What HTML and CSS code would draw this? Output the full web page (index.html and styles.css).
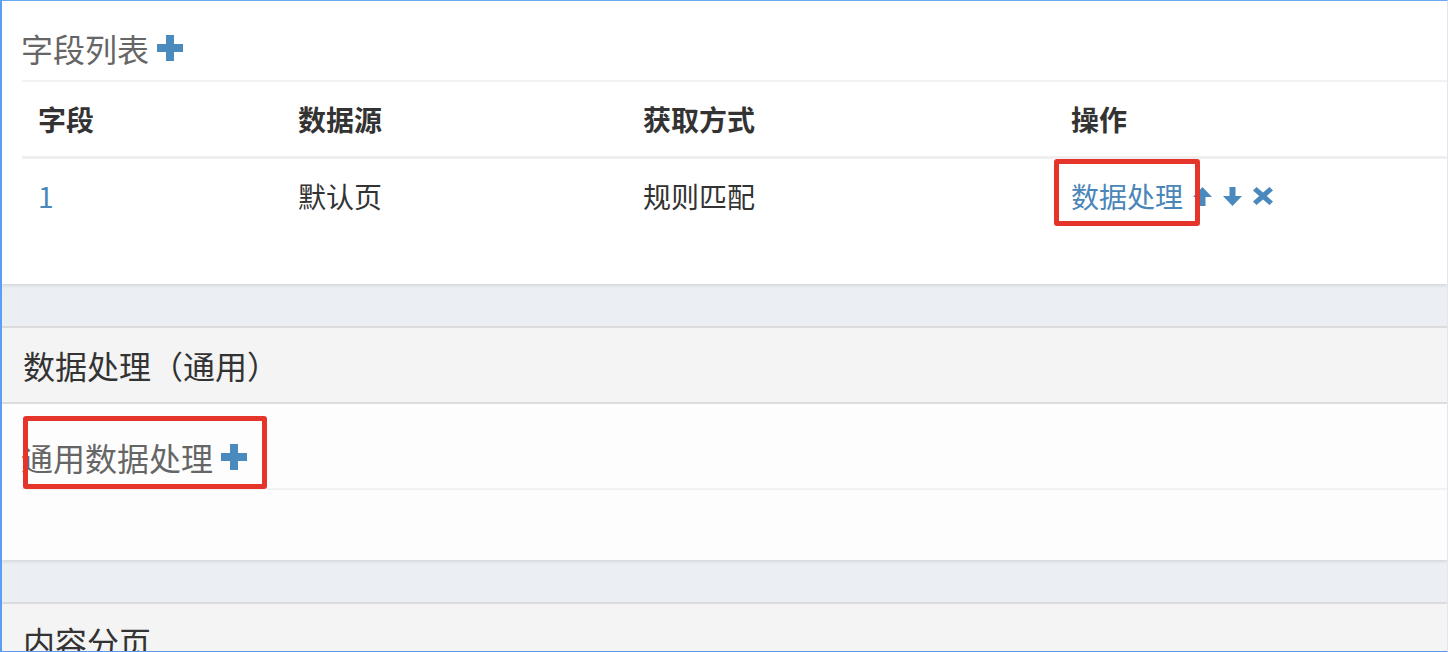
FILE: index.html
```html
<!DOCTYPE html>
<html lang="zh-CN">
<head>
<meta charset="utf-8">
<title>字段列表</title>
<link rel="stylesheet" href="styles.css">
</head>
<body>
<div class="frame">
  <section class="panel">
    <div class="panel-body">
      <h3 class="block-title">字段列表
        <svg class="plus" viewBox="0 0 26 26" width="26" height="26"><path d="M9 0h8v9h9v8h-9v9h-8v-9h-9v-8h9z"/></svg>
      </h3>
      <table class="grid">
        <thead>
          <tr><th class="c1">字段</th><th class="c2">数据源</th><th class="c3">获取方式</th><th>操作</th></tr>
        </thead>
        <tbody>
          <tr>
            <td><a class="link">1</a></td>
            <td>默认页</td>
            <td>规则匹配</td>
            <td>
              <span class="ops">
                <a class="link mark mark-op">数据处理</a>
                <svg class="ico up" viewBox="0 0 19 19" width="19" height="19"><path d="M9.5 0L19 10H12.5V19H6.5V10H0Z"/></svg>
                <svg class="ico" viewBox="0 0 19 19" width="19" height="19"><path d="M9.5 19L19 9H12.5V0H6.5V9H0Z"/></svg>
                <svg class="ico" viewBox="0 0 20 18" width="20" height="18"><path d="M3.5 0L10 5.6 16.5 0 20 3.4 13.8 9 20 14.6 16.5 18 10 12.4 3.5 18 0 14.6 6.2 9 0 3.4Z"/></svg>
              </span>
            </td>
          </tr>
        </tbody>
      </table>
    </div>
  </section>
  <div class="gap"></div>
  <section class="panel boxed">
    <div class="panel-head">数据处理（通用）</div>
    <div class="panel-body body-2">
      <h3 class="block-title"><span class="mark mark-add">通用数据处理
        <svg class="plus" viewBox="0 0 26 26" width="26" height="26"><path d="M9 0h8v9h9v8h-9v9h-8v-9h-9v-8h9z"/></svg></span>
      </h3>
      <div class="divider"></div>
    </div>
  </section>
  <div class="gap"></div>
  <section class="panel boxed">
    <div class="panel-head">内容分页</div>
  </section>
</div>
</body>
</html>
```

FILE: styles.css
```css
html, body {
  margin: 0;
  padding: 0;
}
body {
  font-family: "Noto Sans CJK SC", "Noto Sans", sans-serif;
  color: #333;
  background: #ebeef2;
}
.frame {
  height: 652px;
  box-sizing: border-box;
  border-top: 1px solid #6aa8f4;
  border-bottom: 1px solid #5b9aea;
  border-left: 2px solid #5a9ef6;
  border-right: 1px solid #e4e6ea;
  overflow: hidden;
  background: #ebeef2;
}
.panel {
  background: #fff;
  box-shadow: 0 2px 3px rgba(0, 0, 0, 0.09);
  position: relative;
}
.panel-body {
  padding: 27px 0 51px 20px;
}
.block-title {
  margin: 0 0 12px -1px;
  font-size: 32px;
  line-height: 40px;
  height: 40px;
  font-weight: normal;
  color: #666;
  display: flex;
  align-items: center;
  gap: 8px;
}
.plus {
  fill: #4a8abd;
  display: block;
  flex: none;
}
.grid {
  width: 100%;
  border-collapse: collapse;
  border-top: 2px solid #f2f2f2;
  font-size: 28px;
}
.grid th, .grid td {
  text-align: left;
  padding: 17px 16px;
  line-height: 40px;
  white-space: nowrap;
}
.grid th {
  font-weight: bold;
  color: #333;
  border-bottom: 3px solid #efefef;
}
.grid td {
  color: #333;
}
.c1 { width: 228px; }
.c2 { width: 313px; }
.c3 { width: 396px; }
.link {
  color: #4a86b8;
  text-decoration: none;
}
.ops {
  display: inline-flex;
  align-items: center;
}
.ops .ico {
  fill: #4a89bd;
  display: block;
  flex: none;
  margin-left: 11px;
}
.ops .ico.up {
  margin-left: 10px;
}
.mark {
  position: relative;
}
.mark::after {
  content: "";
  position: absolute;
  border: 5px solid #e5352a;
  border-radius: 3px;
  pointer-events: none;
}
.mark-op {
  line-height: 40px;
}
.mark-op::after {
  left: -17px;
  right: -17px;
  top: -17px;
  bottom: -10px;
}
.mark-add {
  display: inline-flex;
  align-items: center;
  gap: 8px;
}
.mark-add::after {
  left: 2px;
  right: -20px;
  top: -21px;
  bottom: -12px;
}
.gap {
  height: 42px;
}
.boxed {
  border-top: 2px solid #dcdcdc;
}
.panel-head {
  height: 74px;
  line-height: 74px;
  background: #f4f4f4;
  border-bottom: 2px solid #dddddd;
  padding-left: 21px;
  font-size: 32px;
  color: #333;
}
.body-2 {
  padding: 33px 0 0 20px;
  background: #fdfdfd;
  height: 123px;
}
.body-2 .block-title {
  margin-bottom: 11px;
}
.divider {
  height: 2px;
  background: #f2f2f2;
}
```
